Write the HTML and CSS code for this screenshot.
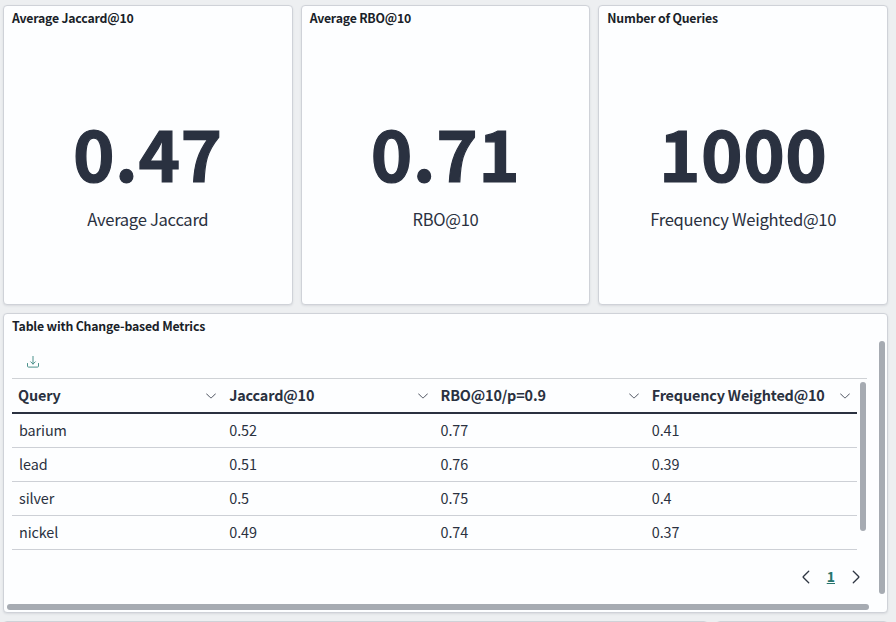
FILE: index.html
```html
<!DOCTYPE html>
<html lang="en">
<head>
<meta charset="utf-8">
<title>Search metrics dashboard</title>
<link rel="stylesheet" href="styles.css">
</head>
<body>
<main class="dashboard">
  <section class="metrics">
    <article class="panel">
      <h2 class="panel-title">Average Jaccard@10</h2>
      <div class="metric"><div class="value">0.47</div><div class="label">Average Jaccard</div></div>
    </article>
    <article class="panel">
      <h2 class="panel-title">Average RBO@10</h2>
      <div class="metric"><div class="value">0.71</div><div class="label">RBO@10</div></div>
    </article>
    <article class="panel">
      <h2 class="panel-title">Number of Queries</h2>
      <div class="metric"><div class="value">1000</div><div class="label">Frequency Weighted@10</div></div>
    </article>
  </section>

  <section class="panel table-panel">
    <h2 class="panel-title">Table with Change-based Metrics</h2>
    <div class="panel-body">
      <div class="content">
        <div class="toolbar">
          <svg class="download" viewBox="0 0 12 12"><path d="M6 0v8M3.700 5.800 6 8.100l2.300-2.300M.5 7.500v2.600q0 1 1 1h9q1 0 1-1V7.500"/></svg>
        </div>
        <div class="grid-wrap">
          <div class="grid">
            <div class="row head">
              <div class="cell"><span>Query</span><svg class="chevron" viewBox="0 0 10 6"><path d="M.5.8 4.300 4.600q.7.6 1.400 0L9.500.8"/></svg></div>
              <div class="cell"><span>Jaccard@10</span><svg class="chevron" viewBox="0 0 10 6"><path d="M.5.8 4.300 4.600q.7.6 1.400 0L9.500.8"/></svg></div>
              <div class="cell"><span>RBO@10/p=0.9</span><svg class="chevron" viewBox="0 0 10 6"><path d="M.5.8 4.300 4.600q.7.6 1.400 0L9.500.8"/></svg></div>
              <div class="cell"><span>Frequency Weighted@10</span><svg class="chevron" viewBox="0 0 10 6"><path d="M.5.8 4.300 4.600q.7.6 1.400 0L9.500.8"/></svg></div>
            </div>
            <div class="row"><div class="cell">barium</div><div class="cell">0.52</div><div class="cell">0.77</div><div class="cell">0.41</div></div>
            <div class="row"><div class="cell">lead</div><div class="cell">0.51</div><div class="cell">0.76</div><div class="cell">0.39</div></div>
            <div class="row"><div class="cell">silver</div><div class="cell">0.5</div><div class="cell">0.75</div><div class="cell">0.4</div></div>
            <div class="row"><div class="cell">nickel</div><div class="cell">0.49</div><div class="cell">0.74</div><div class="cell">0.37</div></div>
          </div>
          <div class="grid-scroll"></div>
        </div>
        <nav class="pager">
          <svg class="arrow" viewBox="0 0 8 14"><path d="M6.700 1.200 1.400 6.500q-.5.5 0 1l5.300 5.300"/></svg>
          <span class="page">1</span>
          <svg class="arrow" viewBox="0 0 8 14"><path d="M1.300 1.200 6.600 6.500q.5.5 0 1l-5.300 5.300"/></svg>
        </nav>
      </div>
      <div class="body-scroll"></div>
    </div>
    <div class="bottom-scroll"></div>
  </section>

  <section class="next-row">
    <div class="panel"></div>
    <div class="panel"></div>
  </section>
</main>
</body>
</html>
```
FILE: styles.css
```css
* { box-sizing: border-box; }

body {
  margin: 0;
  background: #edeff1;
  color: #2a3140;
  font-family: "Noto Sans CJK JP", "Noto Sans", sans-serif;
}

.dashboard {
  display: flex;
  flex-direction: column;
  gap: 8px;
  width: 888px;
  height: 622px;
  padding: 5px 0 0 3px;
}

.metrics {
  display: grid;
  grid-template-columns: repeat(3, 1fr);
  gap: 8px;
  flex: none;
  height: 300px;
}

.panel {
  display: flex;
  flex-direction: column;
  background: #fdfeff;
  border: 1px solid #cfd2d8;
  border-radius: 4px;
  box-shadow: 0 1px 2px rgba(100, 105, 120, 0.15);
}

.panel-title {
  flex: none;
  margin: 0;
  padding: 0 8px;
  height: 25px;
  line-height: 25px;
  font-size: 12.3px;
  letter-spacing: -0.2px;
  font-weight: 700;
  color: #1a1f29;
}

.metric {
  flex: 1;
  display: flex;
  flex-direction: column;
  align-items: center;
  padding-top: 75px;
  white-space: nowrap;
}

.value {
  height: 90px;
  line-height: 90px;
  font-size: 70.5px;
  letter-spacing: 0.5px;
  font-weight: 700;
  -webkit-text-stroke: 1.2px #2a3140;
}

.label {
  height: 27px;
  margin-top: 10px;
  line-height: 27px;
  font-size: 16.6px;
  letter-spacing: -0.3px;
}

.table-panel { height: 300px; flex: none; }

.panel-body {
  display: flex;
  height: 264px;
}

.content {
  width: 855px;
  margin-left: 8px;
}

.toolbar {
  height: 39px;
  padding: 17px 0 0 15px;
}

svg {
  display: block;
  fill: none;
  stroke-linecap: round;
  stroke-linejoin: round;
}

.download {
  width: 12px;
  height: 12px;
  stroke: #4b918b;
  stroke-width: 1;
}

.grid-wrap {
  display: flex;
  gap: 3px;
  border-top: 1px solid #cfd2d6;
}

.grid { width: 845px; }

.row {
  display: grid;
  grid-template-columns: repeat(4, 1fr);
  height: 34px;
}

.row .cell {
  border-bottom: 1px solid #cdd0d6;
  padding-left: 7px;
  line-height: 34px;
  font-size: 14.4px;
  letter-spacing: -0.1px;
}

.row .cell + .cell { padding-left: 6px; }

.row.head {
  height: 35px;
  margin-bottom: -1px;
  border-bottom: 2px solid #2a3140;
}

.row.head .cell {
  display: flex;
  align-items: center;
  justify-content: space-between;
  padding: 0 7px 0 6px;
  border: 0;
  line-height: 31px;
  letter-spacing: -0.16px;
  font-weight: 700;
}

.row.head span { height: 33px; }

.chevron {
  width: 10px;
  height: 6px;
  stroke: #4a505d;
  stroke-width: 1;
}

.grid-scroll {
  width: 6px;
  height: 149px;
  margin-top: 3px;
  border-radius: 3px;
  background: #a6abb2;
}

.pager {
  display: flex;
  justify-content: flex-end;
  align-items: center;
  height: 26px;
  margin-top: 15px;
  padding-right: 7px;
  gap: 17px;
}

.arrow {
  width: 8px;
  height: 14px;
  stroke: #2f3643;
  stroke-width: 1.3;
}

.page {
  height: 26px;
  line-height: 24px;
  font-size: 14px;
  font-weight: 700;
  color: #27756d;
  text-decoration: underline;
}

.body-scroll {
  width: 6px;
  height: 253px;
  margin: 2px 0 0 12px;
  border-radius: 3px;
  background: #a6abb2;
}

.bottom-scroll {
  width: 862px;
  height: 6px;
  margin: 1px 0 0 3px;
  border-radius: 3px;
  background: #a6abb2;
}

.next-row {
  display: grid;
  grid-template-columns: 705px 1fr;
  gap: 8px;
  height: 1px;
  overflow: hidden;
}

.next-row .panel {
  height: 20px;
}
```
